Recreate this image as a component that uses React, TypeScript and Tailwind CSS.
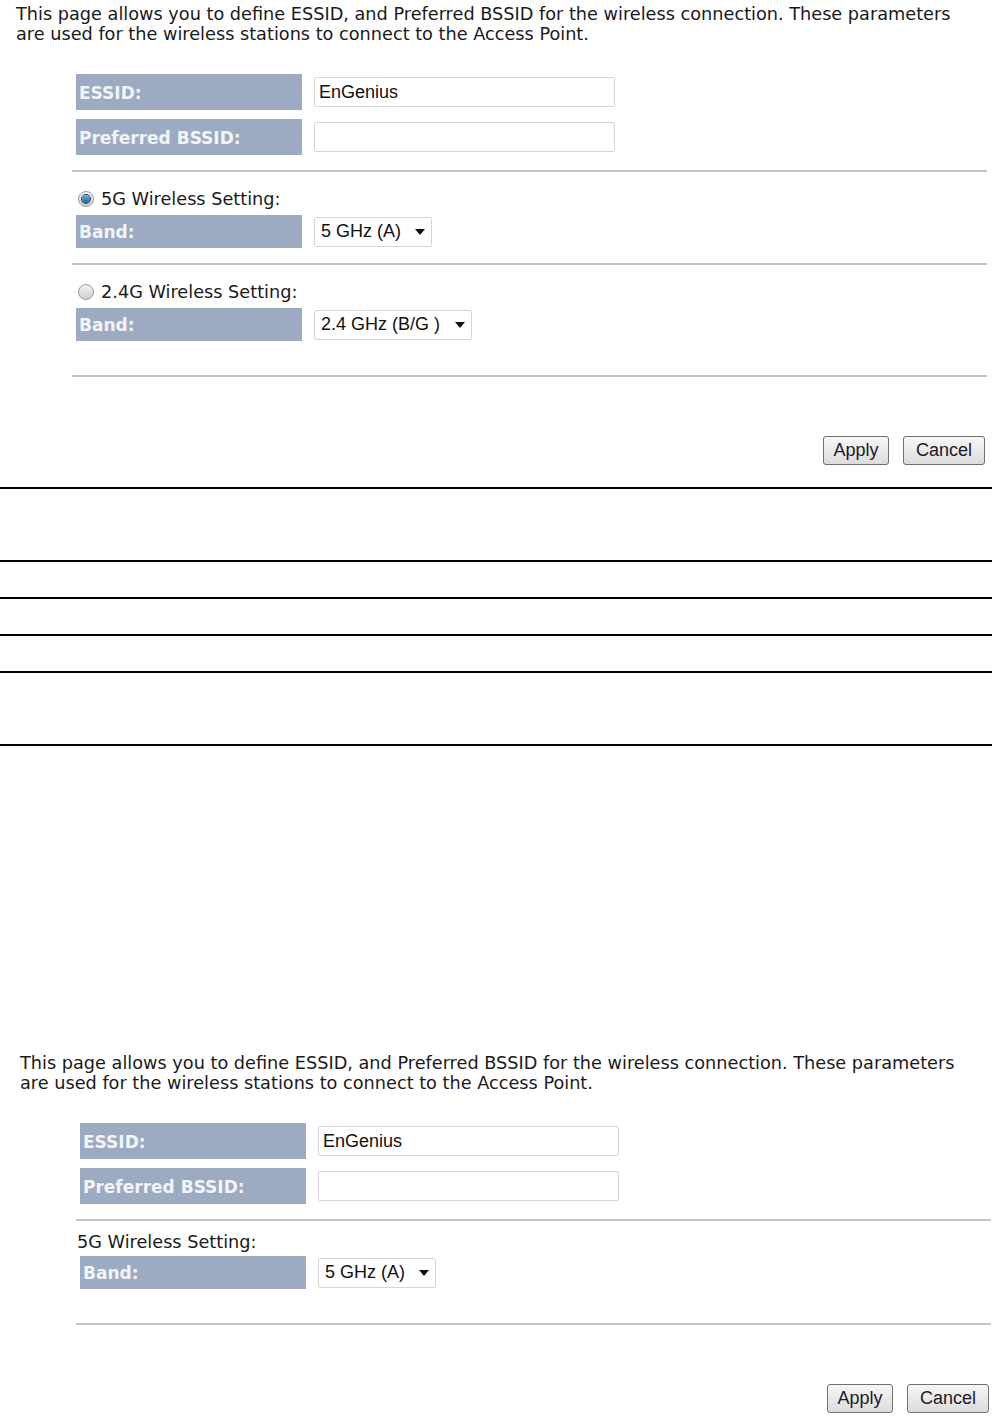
import type { ReactNode } from "react";

const verdana = "font-['DejaVu_Sans','Liberation_Sans',sans-serif]";
const arial = "font-['Liberation_Sans',Arial,sans-serif]";

function Label({ children, tall }: { children: ReactNode; tall?: boolean }) {
  return (
    <div
      className={`flex w-[226px] items-center bg-[#9cabc2] pl-[3px] pt-[3px] text-[17px] font-bold text-[#f2f4f8] ${verdana} ${
        tall ? "h-[36px]" : "h-[33px]"
      }`}
    >
      {children}
    </div>
  );
}

function TextBox({ value }: { value?: string }) {
  return (
    <div
      className={`ml-[12px] flex h-[30px] w-[301px] items-center rounded-[2px] border border-[#d6d6d6] bg-white pl-[4px] text-[18px] text-[#111] ${arial}`}
    >
      {value}
    </div>
  );
}

function Select({ value, width }: { value: string; width: string }) {
  return (
    <div
      className={`ml-[12px] flex h-[30px] items-center justify-between rounded-[2px] border border-[#d6d6d6] bg-white pl-[6px] pr-[6px] text-[18px] text-[#111] ${arial} ${width}`}
    >
      <span>{value}</span>
      <svg width="10" height="6" viewBox="0 0 10 6">
        <path d="M0 0h10L5 6z" fill="#111" />
      </svg>
    </div>
  );
}

function Radio({ checked }: { checked?: boolean }) {
  return (
    <div className="flex h-[16px] w-[16px] items-center justify-center rounded-full border border-[#9a9a9a] bg-gradient-to-b from-[#f4f4f4] to-[#cfcfcf]">
      {checked && (
        <div className="h-[8px] w-[8px] rounded-full bg-gradient-to-b from-[#6fb7e6] to-[#1b5d8c] ring-1 ring-[#274a66]" />
      )}
    </div>
  );
}

function Btn({ children, width }: { children: ReactNode; width: string }) {
  return (
    <button
      type="button"
      className={`h-[29px] rounded-[3px] border border-[#707070] bg-gradient-to-b from-[#f6f6f6] to-[#dcdcdc] text-[18px] text-[#1a1a2a] ${arial} ${width}`}
    >
      {children}
    </button>
  );
}

function Hr() {
  return <div className="h-[2px] w-full bg-[#c4c4c4]" />;
}

function Panel({ withRadios }: { withRadios?: boolean }) {
  return (
    <div>
      <p className={`whitespace-nowrap pt-[4px] text-[17.7px] leading-[20px] text-[#1a1a1a] ${verdana}`}>
        This page allows you to define ESSID, and Preferred BSSID for the wireless connection. These parameters
        <br />
        are used for the wireless stations to connect to the Access Point.
      </p>

      <div className="ml-[56px] mt-[30px] w-[915px]">
        <div className="flex flex-col gap-[9px] pl-[4px]">
          <div className="flex items-center">
            <Label tall>ESSID:</Label>
            <TextBox value="EnGenius" />
          </div>
          <div className="flex items-center">
            <Label tall>Preferred BSSID:</Label>
            <TextBox />
          </div>
        </div>

        <div className="mt-[15px]">
          <Hr />
        </div>

        {withRadios ? (
          <>
            <div className="pl-[6px] pt-[16px]">
              <div className={`flex h-[22px] items-center gap-[7px] text-[17.7px] text-[#1a1a1a] ${verdana}`}>
                <Radio checked />
                <span>5G Wireless Setting:</span>
              </div>
            </div>
            <div className="mt-[5px] flex items-center pl-[4px]">
              <Label>Band:</Label>
              <Select value="5 GHz (A)" width="w-[118px]" />
            </div>
            <div className="mt-[15px]">
              <Hr />
            </div>
            <div className="pl-[6px] pt-[16px]">
              <div className={`flex h-[22px] items-center gap-[7px] text-[17.7px] text-[#1a1a1a] ${verdana}`}>
                <Radio />
                <span>2.4G Wireless Setting:</span>
              </div>
            </div>
            <div className="mt-[5px] flex items-center pl-[4px]">
              <Label>Band:</Label>
              <Select value="2.4 GHz (B/G )" width="w-[158px]" />
            </div>
          </>
        ) : (
          <>
            <div className={`pl-[1px] pt-[10px] text-[17.7px] leading-[22px] text-[#1a1a1a] ${verdana}`}>
              5G Wireless Setting:
            </div>
            <div className="mt-[3px] flex items-center pl-[4px]">
              <Label>Band:</Label>
              <Select value="5 GHz (A)" width="w-[118px]" />
            </div>
          </>
        )}

        <div className="mt-[34px]">
          <Hr />
        </div>

        <div className="mt-[59px] flex justify-end gap-[14px] pr-[2px]">
          <Btn width="w-[66px]">Apply</Btn>
          <Btn width="w-[82px]">Cancel</Btn>
        </div>
      </div>
    </div>
  );
}

export default function App() {
  return (
    <div className="min-h-[1420px] w-[998px] bg-white">
      <div className="pl-[16px]">
        <Panel withRadios />
      </div>

      <div className="mt-[22px] w-[992px]">
        <div className="h-[73px] border-t-2 border-black" />
        <div className="h-[37px] border-t-2 border-black" />
        <div className="h-[37px] border-t-2 border-black" />
        <div className="h-[37px] border-t-2 border-black" />
        <div className="h-[73px] border-t-2 border-black" />
        <div className="border-t-2 border-black" />
      </div>

      <div className="mt-[303px] pl-[20px]">
        <Panel />
      </div>
    </div>
  );
}
